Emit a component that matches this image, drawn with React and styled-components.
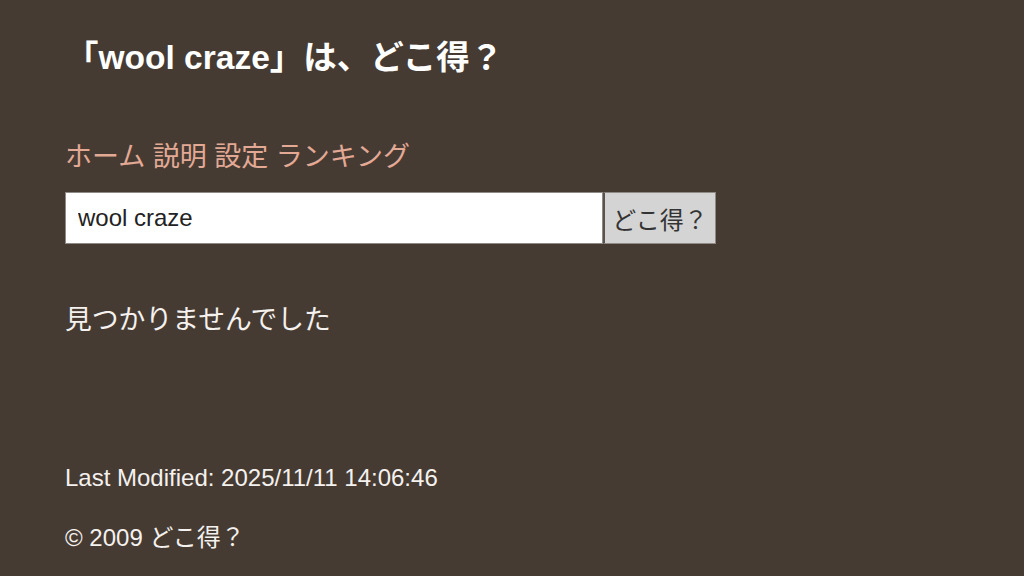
import styled, { createGlobalStyle } from 'styled-components';

const GlobalStyle = createGlobalStyle`
  html, body {
    margin: 0;
    padding: 0;
    background: #463b33;
  }
  body {
    font-family: "Liberation Sans", "Noto Sans CJK JP", sans-serif;
    color: #f4f1ee;
  }
`;

const Page = styled.div`
  width: 1024px;
  height: 576px;
  box-sizing: border-box;
  padding: 36px 0 0 65px;
  background: #463b33;
  overflow: hidden;
`;

const Title = styled.h1`
  margin: 0;
  font-size: 33.5px;
  font-weight: bold;
  line-height: 44px;
  color: #ffffff;
`;

const Nav = styled.nav`
  margin-top: 59px;
  font-size: 27px;
  line-height: 36px;
  white-space: nowrap;
`;

const NavLink = styled.a`
  color: #e3a995;
  text-decoration: none;
`;

const SearchForm = styled.form`
  display: flex;
  margin-top: 17px;
`;

const SearchInput = styled.input`
  width: 538px;
  height: 52px;
  box-sizing: border-box;
  border: 1px solid #8f8a85;
  padding: 0 12px;
  font-family: "Liberation Sans", "Noto Sans CJK JP", sans-serif;
  font-size: 24px;
  color: #222;
  background: #fff;
  outline: none;
`;

const SearchButton = styled.button`
  width: 113px;
  height: 52px;
  box-sizing: border-box;
  border: 1px solid #8f8a85;
  border-left: 2px solid #5a524c;
  background: #d4d4d4;
  font-family: "Liberation Sans", "Noto Sans CJK JP", sans-serif;
  font-size: 24px;
  color: #333;
  padding: 0;
`;

const Result = styled.p`
  margin: 58px 0 0;
  font-size: 26.8px;
  line-height: 36px;
`;

const Footer = styled.footer`
  margin-top: 124px;
  font-size: 24px;
  line-height: 32px;
`;

const FooterLine = styled.p`
  margin: 0 0 ${(p) => p.$gap || 0}px;
`;

const navItems = ['ホーム', '説明', '設定', 'ランキング'];

export default function App() {
  return (
    <>
      <GlobalStyle />
      <Page>
        <Title>「wool craze」は、どこ得？</Title>
        <Nav>
          {navItems.map((item, i) => (
            <span key={item}>
              {i > 0 && ' '}
              <NavLink href="#">{item}</NavLink>
            </span>
          ))}
        </Nav>
        <SearchForm onSubmit={(e) => e.preventDefault()}>
          <SearchInput defaultValue="wool craze" />
          <SearchButton type="submit">どこ得？</SearchButton>
        </SearchForm>
        <Result>見つかりませんでした</Result>
        <Footer>
          <FooterLine $gap={28}>Last Modified: 2025/11/11 14:06:46</FooterLine>
          <FooterLine>© 2009 どこ得？</FooterLine>
        </Footer>
      </Page>
    </>
  );
}
